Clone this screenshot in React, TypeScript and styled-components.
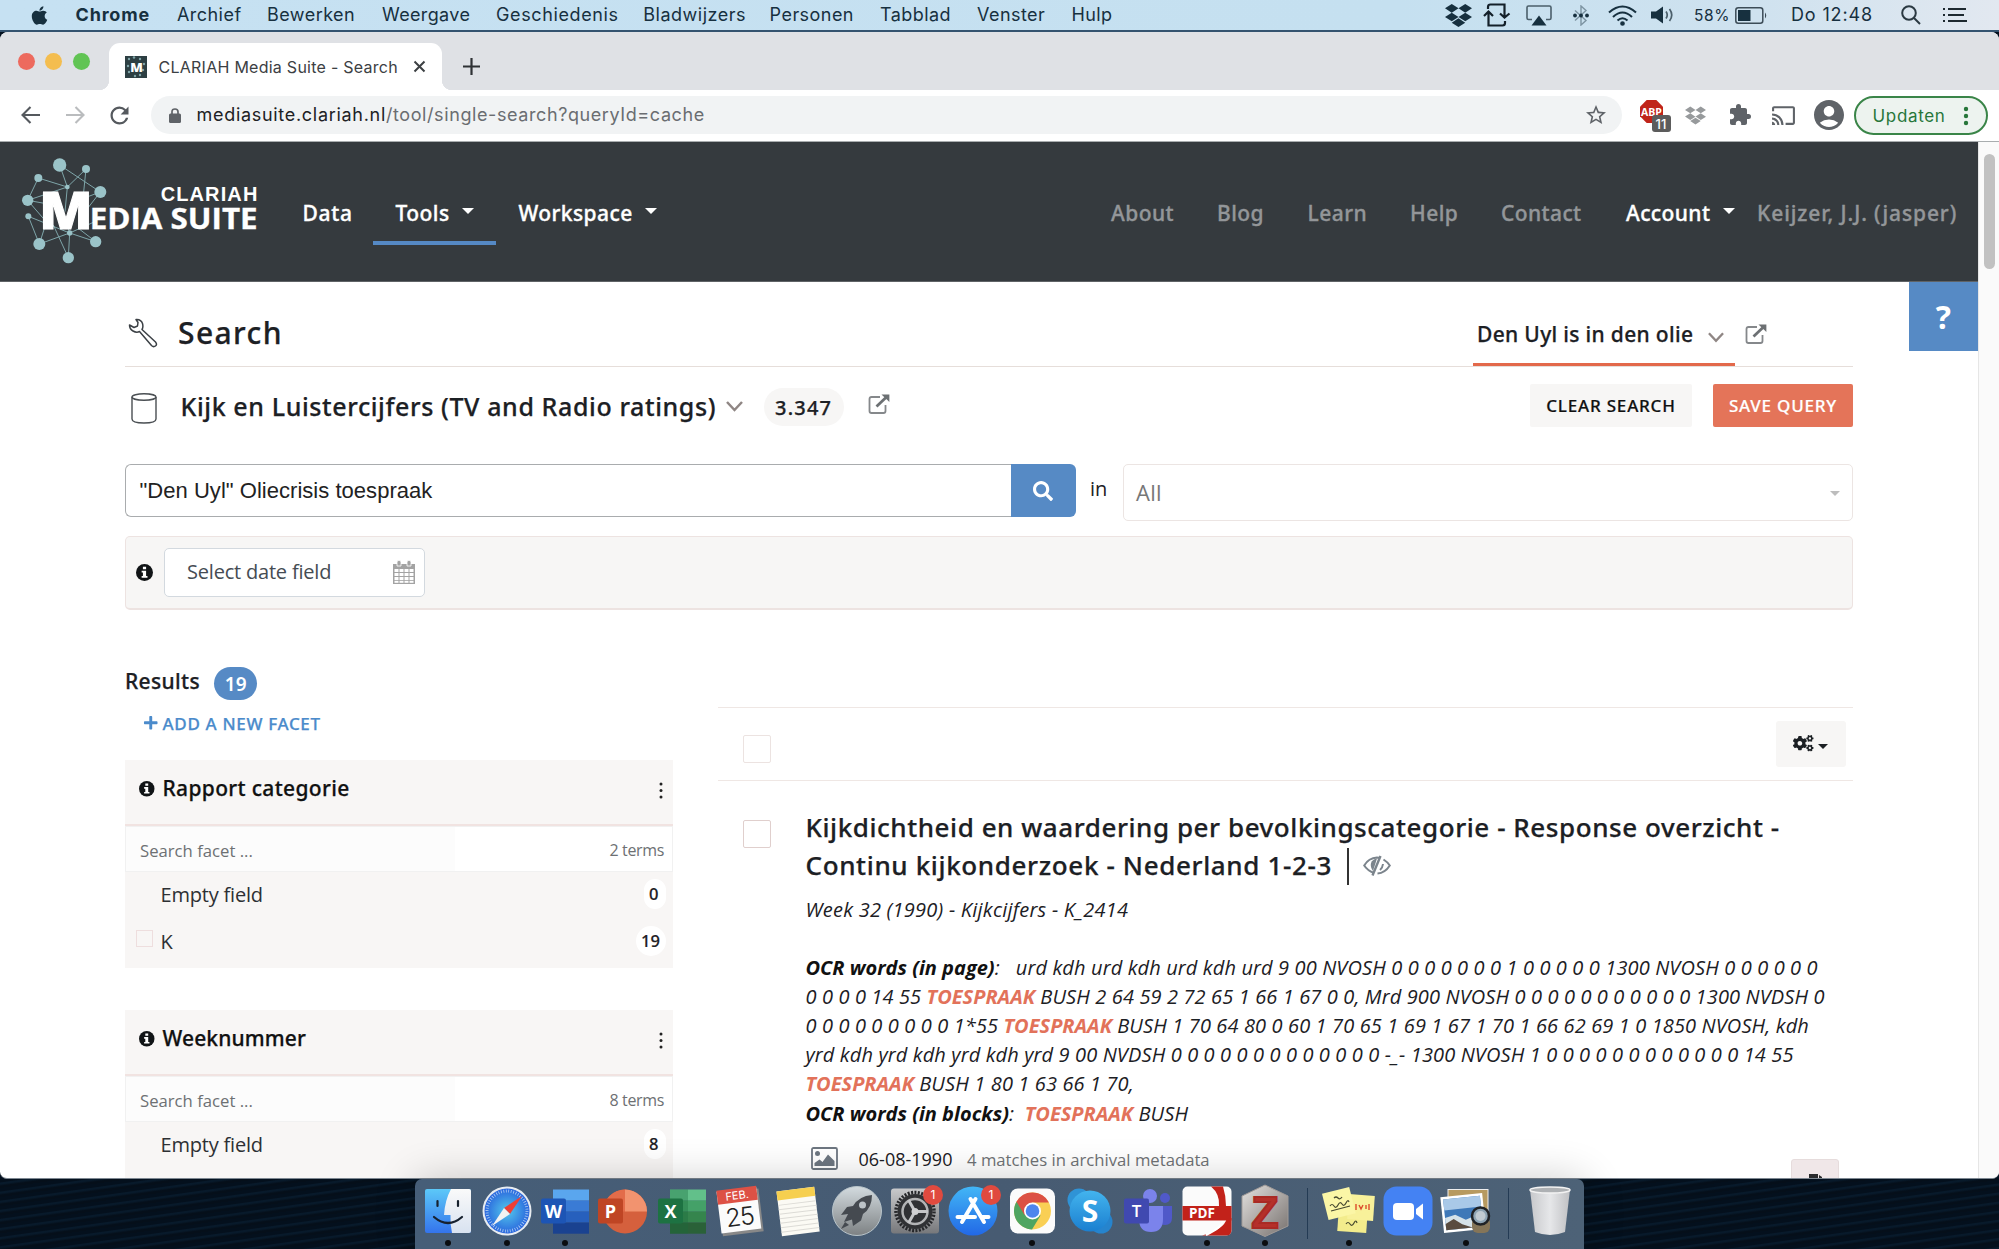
import React from 'react';
import styled, { createGlobalStyle } from 'styled-components';
import { FaApple, FaDropbox, FaPlus, FaSearch, FaCogs } from 'react-icons/fa';
import { MdExtension, MdCast, MdAccountCircle, MdStarBorder, MdRefresh } from 'react-icons/md';

const GlobalStyle = createGlobalStyle`
  * { box-sizing: border-box; }
  html, body { margin: 0; padding: 0; overflow: hidden; }
  body { width: 1999px; height: 1249px; background: #04111f; }
  svg { display: block; flex: none; }
`;

const ui = `"Inter", "Liberation Sans", sans-serif`;
const body = `"Open Sans", "Noto Sans", sans-serif`;
const heading = `"Noto Sans", "Open Sans", sans-serif`;

const Screen = styled.div`
  width: 1999px;
  height: 1249px;
  display: flex;
  flex-direction: column;
  overflow: hidden;
  background: #04111f;
  font-family: ${body};
  white-space: pre;
`;

/* ---------- macOS menu bar ---------- */

const MenuBar = styled.div`
  flex: none;
  height: 32px;
  display: flex;
  align-items: center;
  justify-content: space-between;
  padding: 0 32px 0 29px;
  background: linear-gradient(90deg, #c6e1f2 0%, #c5e0f0 70%, #cfe2ef 88%, #e2e8f0 100%);
  border-bottom: 2px solid #34536f;
  font-family: ${ui};
  color: #17303f;
`;
const MenuGroup = styled.div`
  display: flex;
  align-items: center;
  height: 30px;
`;
const MenuItem = styled.span<{ $slot?: number; $bold?: boolean; $ls?: number }>`
  font-size: 18px;
  line-height: 30px;
  width: ${p => (p.$slot ? p.$slot + 'px' : 'auto')};
  font-weight: ${p => (p.$bold ? 700 : 400)};
  letter-spacing: ${p => p.$ls ?? 0.45}px;
`;
const StatusSlot = styled.span<{ $slot: number }>`
  width: ${p => p.$slot}px;
  display: flex;
  align-items: center;
`;
const Percent = styled.span`
  width: 41px;
  font-size: 15.5px;
  letter-spacing: 0.6px;
`;

/* ---------- browser chrome ---------- */

const Browser = styled.div`
  flex: none;
  height: 1147px;
  display: flex;
  flex-direction: column;
  overflow: hidden;
  background: #fff;
  border-radius: 8px 8px 7px 7px;
  border-bottom: 1px solid #7d8791;
`;
const TabStrip = styled.div`
  flex: none;
  height: 58px;
  display: flex;
  align-items: flex-end;
  background: #dfe1e5;
`;
const Lights = styled.div`
  display: flex;
  gap: 10.9px;
  width: 108.5px;
  height: 58px;
  padding: 21px 0 0 17.5px;
`;
const Light = styled.i<{ $c: string }>`
  width: 17px;
  height: 17px;
  border-radius: 50%;
  background: ${p => p.$c};
`;
const Tab = styled.div`
  position: relative;
  width: 333px;
  height: 47px;
  display: flex;
  align-items: center;
  padding: 0 0 0 16.5px;
  border-radius: 11px 11px 0 0;
  background: #fff;
  font-family: ${ui};
  &::before,
  &::after {
    content: '';
    position: absolute;
    bottom: 0;
    width: 10px;
    height: 10px;
  }
  &::before {
    left: -10px;
    background: radial-gradient(circle at 0 0, transparent 10px, #fff 10.5px);
  }
  &::after {
    right: -10px;
    background: radial-gradient(circle at 100% 0, transparent 10px, #fff 10.5px);
  }
`;
const TabTitle = styled.span`
  width: 254.5px;
  margin-left: 11.5px;
  font-size: 16px;
  line-height: 24px;
  letter-spacing: 0.26px;
  color: #3c4043;
`;
const NewTab = styled.div`
  padding: 0 0 15px 21.5px;
`;
const Toolbar = styled.div`
  flex: none;
  height: 52px;
  display: flex;
  align-items: center;
  padding: 0 0 1px 20px;
  border-bottom: 1px solid #a9adaf;
  font-family: ${ui};
  color: #5f6368;
`;
const NavIcon = styled.span<{ $slot: number }>`
  width: ${p => p.$slot}px;
  display: flex;
`;
const Omnibox = styled.div`
  width: 1471px;
  height: 38px;
  display: flex;
  align-items: center;
  padding: 0 14px 0 18px;
  border-radius: 19px;
  background: #f1f3f4;
  font-size: 18px;
`;
const Url = styled.span`
  flex: 1;
  margin-left: 16px;
  line-height: 30px;
  letter-spacing: 0.59px;
  color: #6a6d71;
`;
const Host = styled.span`
  letter-spacing: 0.7px;
  color: #202124;
`;
const Extensions = styled.div`
  display: flex;
  align-items: center;
  height: 38px;
  padding-left: 18.5px;
`;
const AdBlock = styled.div`
  position: relative;
  width: 45px;
  height: 30px;
`;
const AdCount = styled.span`
  position: absolute;
  left: 11.5px;
  top: 15px;
  width: 19px;
  height: 17px;
  border-radius: 3px;
  background: #5c5c5c;
  color: #fff;
  font-size: 13px;
  font-weight: 500;
  line-height: 18px;
  text-align: center;
`;
const UpdateButton = styled.div`
  width: 134px;
  height: 39px;
  display: flex;
  align-items: center;
  justify-content: space-between;
  padding: 1px 17px 0 17px;
  border: 2px solid #3a8548;
  border-radius: 20px;
  background: #edf3ef;
  color: #27763a;
  font-size: 17px;
  letter-spacing: 0.66px;
`;

/* ---------- page shell ---------- */

const Viewport = styled.div`
  flex: 1;
  min-height: 0;
  display: flex;
`;
const Page = styled.div`
  position: relative;
  width: 1978px;
  overflow: hidden;
  color: #1c2024;
`;
const ScrollTrack = styled.div`
  width: 21px;
  padding: 12px 4px 0 5px;
  background: #fafafa;
  border-left: 1px solid #e6e6e6;
`;
const ScrollThumb = styled.div`
  width: 11px;
  height: 115px;
  border-radius: 6px;
  background: #c1c1c1;
`;
const SiteHeader = styled.header`
  height: 140px;
  display: flex;
  align-items: flex-start;
  padding: 3px 0 0 10px;
  background: #353a3e;
  border-bottom: 1px solid #5f6366;
`;
const SiteNav = styled.nav<{ $left: number }>`
  display: flex;
  align-items: flex-start;
  padding-top: 54px;
  margin-left: ${p => p.$left}px;
`;
const NavLink = styled.span<{ $slot: number; $muted?: boolean; $ls?: number; $pad?: number; $active?: boolean }>`
  width: ${p => p.$slot}px;
  height: 46px;
  padding-left: ${p => p.$pad ?? 0}px;
  display: flex;
  align-items: flex-start;
  font-family: ${heading};
  font-size: 21px;
  font-weight: 500;
  line-height: 29px;
  letter-spacing: ${p => p.$ls ?? 0.45}px;
  -webkit-text-stroke: 0.35px;
  color: ${p => (p.$muted ? '#939699' : '#fff')};
  border-bottom: ${p => (p.$active ? '4px solid #5589c5' : '0')};
`;
const Caret = styled.i<{ $c: string; $w: number; $ml: number; $mt: number }>`
  margin: ${p => p.$mt}px 0 0 ${p => p.$ml}px;
  border-left: ${p => p.$w}px solid transparent;
  border-right: ${p => p.$w}px solid transparent;
  border-top: ${p => p.$w}px solid ${p => p.$c};
`;
const HelpButton = styled.div`
  position: absolute;
  right: 0;
  top: 140px;
  width: 69px;
  height: 69px;
  background: #568ac5;
  color: #fff;
  font: 700 32px/69px ${body};
  text-align: center;
`;
const Content = styled.main`
  width: 1728px;
  margin-left: 125px;
`;

/* ---------- tool title and collection ---------- */

const TitleRow = styled.div`
  height: 85px;
  display: flex;
  align-items: flex-start;
  border-bottom: 1px solid #e6deda;
`;
const HeadText = styled.span<{ $size: number; $lh: number; $ls: number; $mt?: number; $ml?: number }>`
  font-family: ${heading};
  font-weight: 500;
  font-size: ${p => p.$size}px;
  line-height: ${p => p.$lh}px;
  letter-spacing: ${p => p.$ls}px;
  margin: ${p => p.$mt ?? 0}px 0 0 ${p => p.$ml ?? 0}px;
  -webkit-text-stroke: 0.25px;
`;
const IconBox = styled.span<{ $mt: number; $ml?: number }>`
  display: flex;
  margin: ${p => p.$mt}px 0 0 ${p => p.$ml ?? 0}px;
`;
const ProjectTab = styled.div`
  width: 262.5px;
  height: 84px;
  margin-left: auto;
  display: flex;
  padding: 37px 0 0 4.5px;
  border-bottom: 3px solid #e3694b;
`;
const ProjectLink = styled.div`
  width: 118px;
  padding: 41.5px 0 0 10px;
`;
const CollectionRow = styled.div`
  height: 97px;
  display: flex;
  align-items: flex-start;
`;
const CountPill = styled.div`
  width: 80px;
  height: 38px;
  margin: 21px 0 0 20.5px;
  border-radius: 19px;
  background: #f7f6f5;
  display: flex;
  justify-content: center;
`;
const Button = styled.div<{ $primary?: boolean }>`
  margin: 17px 0 0 ${p => (p.$primary ? '21px' : 'auto')};
  width: ${p => (p.$primary ? 140 : 162)}px;
  height: 43px;
  border-radius: 2px;
  background: ${p => (p.$primary ? '#e47459' : '#f7f6f5')};
  color: ${p => (p.$primary ? '#fff' : '#111')};
  font: 500 17px/43px ${heading};
  letter-spacing: 0.8px;
  text-align: center;
  -webkit-text-stroke: 0.2px;
`;

/* ---------- query form ---------- */

const QueryRow = styled.div`
  height: 72px;
  display: flex;
  align-items: flex-start;
`;
const QueryInput = styled.div`
  width: 885.5px;
  height: 53px;
  padding-left: 13.5px;
  border: 1px solid #a9acae;
  border-right: 0;
  border-radius: 6px 0 0 6px;
  font: 22px/51px "Liberation Sans", sans-serif;
  letter-spacing: 0.03px;
  color: #222;
`;
const QuerySubmit = styled.div`
  width: 65.5px;
  height: 53px;
  border-radius: 0 6px 6px 0;
  background: #568ac5;
  color: #fff;
  display: flex;
  align-items: center;
  justify-content: center;
`;
const InLabel = styled.span`
  width: 47px;
  padding-left: 14px;
  font-size: 20px;
  line-height: 49px;
`;
const FieldSelect = styled.div`
  flex: 1;
  height: 57px;
  display: flex;
  justify-content: space-between;
  padding: 0 12px;
  border: 1.5px solid #ece5e3;
  border-radius: 5px;
  font-size: 22px;
  line-height: 54px;
  letter-spacing: 0.3px;
  color: #777;
`;
const DateBar = styled.div`
  height: 74px;
  display: flex;
  align-items: center;
  padding-left: 9.5px;
  border: 1px solid #ede3e1;
  border-bottom-width: 2px;
  border-radius: 5px;
  background: #f7f6f5;
`;
const DateSelect = styled.div`
  width: 261px;
  height: 49px;
  margin-left: 11px;
  display: flex;
  align-items: center;
  justify-content: space-between;
  padding: 0 9px 2px 22.5px;
  border: 1.5px solid #d3d9df;
  border-radius: 5px;
  background: #fff;
  font-size: 20px;
  letter-spacing: -0.2px;
  color: #454c53;
`;

/* ---------- results ---------- */

const Columns = styled.div`
  display: flex;
  justify-content: space-between;
`;
const Sidebar = styled.aside`
  width: 548px;
  padding-top: 54px;
`;
const ResultsRow = styled.div`
  height: 47px;
  display: flex;
  align-items: flex-start;
`;
const ResultsBadge = styled.span`
  width: 43.5px;
  height: 33px;
  margin: 3px 0 0 14px;
  border-radius: 17px;
  background: #568ac5;
  color: #fff;
  font: 600 19px/34px ${heading};
  text-align: center;
`;
const AddFacet = styled.div`
  height: 49px;
  padding-left: 17.5px;
  display: flex;
  align-items: flex-start;
  color: #4b8bcb;
`;
const Facet = styled.section`
  height: 208px;
  margin-bottom: 42px;
  background: #f8f6f5;
`;
const FacetHead = styled.div`
  height: 66px;
  display: flex;
  align-items: flex-start;
  justify-content: space-between;
  padding: 13px 9.5px 0 14px;
  border-bottom: 2px solid #f1e3e1;
  color: #111;
`;
const FacetName = styled.div`
  display: flex;
`;
const FacetSearch = styled.div`
  height: 46px;
  display: flex;
  align-items: center;
  justify-content: space-between;
  padding: 2px 8px 0 14px;
  border: 1px solid #f1f1f1;
  background: linear-gradient(90deg, #fcfcfc 329px, #fff 329px);
  font-size: 16.7px;
  color: #6d7073;
`;
const TermCount = styled.span`
  font-size: 16px;
  letter-spacing: -0.35px;
`;
const TermRow = styled.div`
  height: 44px;
  margin-bottom: 3px;
  display: flex;
  align-items: center;
  padding: 0 7.5px 0 11px;
`;
const TermBox = styled.i<{ $hidden?: boolean }>`
  width: 17px;
  height: 17px;
  margin-bottom: 5px;
  border: 1.5px solid ${p => (p.$hidden ? 'transparent' : '#eedede')};
`;
const TermName = styled.span`
  flex: 1;
  margin-left: 7.5px;
  font-size: 20px;
  line-height: 43px;
  letter-spacing: -0.2px;
  color: #2d3033;
`;
const TermBadge = styled.span`
  height: 30px;
  min-width: 22px;
  padding: 0 5.5px;
  border-radius: 15px;
  background: #fff;
  font: 500 16.5px/29px ${heading};
  -webkit-text-stroke: 0.2px;
`;
const ResultList = styled.section`
  width: 1135.5px;
  padding-top: 97px;
`;
const ListTools = styled.div`
  height: 74px;
  display: flex;
  align-items: center;
  justify-content: space-between;
  padding: 0 7px 0 25.5px;
  border: solid #efe7e4;
  border-width: 1.5px 0;
`;
const CheckBox = styled.i<{ $dark?: boolean; $mt?: number }>`
  flex: none;
  width: 28px;
  height: 28px;
  margin-top: ${p => p.$mt ?? 0}px;
  border: 1.5px solid ${p => (p.$dark ? '#e0cfcd' : '#ece3e1')};
  border-radius: 2px;
`;
const GearButton = styled.div`
  width: 70px;
  height: 46px;
  padding: 0 0 2px 17px;
  display: flex;
  align-items: center;
  border-radius: 3px;
  background: #f7f6f5;
  color: #1c2024;
`;
const Result = styled.article`
  display: flex;
  align-items: flex-start;
  padding-left: 25.5px;
`;
const ResultBody = styled.div`
  flex: 1;
  padding: 28px 0 0 34.5px;
`;
const ResultTitle = styled.div`
  height: 37.7px;
  display: flex;
  align-items: center;
`;
const TitleDivider = styled.i`
  width: 1.5px;
  height: 37px;
  margin: 1px 14.5px 0 15.5px;
  background: #333;
`;
const Subtitle = styled.div`
  margin-top: 10.5px;
  font-size: 20px;
  font-style: italic;
  line-height: 29px;
  letter-spacing: 0.24px;
`;
const Snippets = styled.div`
  margin-top: 28.9px;
`;
const SnippetLine = styled.div`
  font-size: 20px;
  font-style: italic;
  line-height: 29.15px;
  letter-spacing: 0.125px;
`;
const Label = styled.b`
  letter-spacing: 0;
  color: #111;
`;
const Hit = styled.b`
  letter-spacing: 0;
  color: #e2725a;
`;
const MetaRow = styled.div`
  height: 50px;
  margin-top: 14.5px;
  display: flex;
  align-items: flex-start;
`;
const MetaDate = styled.span`
  width: 108.5px;
  margin: 3px 0 0 20.5px;
  font-size: 18px;
  line-height: 29px;
`;
const MetaMatches = styled.span`
  flex: 1;
  margin-top: 3px;
  font-size: 16.7px;
  line-height: 30px;
  color: #6f7275;
`;
const BookmarkButton = styled.div`
  width: 48px;
  height: 46px;
  margin: 17px 14px 0 0;
  display: flex;
  justify-content: center;
  padding-top: 14px;
  border: 1px solid #e6dcdc;
  border-radius: 3px;
  background: #f0e7e8;
`;

/* ---------- dock ---------- */

const Desktop = styled.div`
  flex: none;
  height: 70px;
  padding-left: 415px;
  background: repeating-linear-gradient(172deg, #04101d 0 3px, #081a2b 4px 5px, #050f1a 7px 9px);
`;
const Dock = styled.div`
  position: relative;
  width: 1169px;
  height: 70px;
  display: flex;
  padding-left: 4px;
  border-radius: 7px 7px 0 0;
  background: linear-gradient(90deg, #465e78 0%, #475b72 50%, #4d6277 100%);
  box-shadow: 0 0 42px rgba(0, 0, 0, 0.2);
`;
const DockSlot = styled.div`
  width: 58.35px;
  height: 70px;
  display: flex;
  flex-direction: column;
  align-items: center;
  padding-top: 7px;
`;
const RunningDot = styled.i`
  width: 6px;
  height: 6px;
  margin-top: 4px;
  border-radius: 50%;
  background: #0b0d10;
`;
const DockDivider = styled.i`
  width: 1.5px;
  height: 51px;
  margin: 9px 12px 0 12.5px;
  background: #243b54;
`;

/* ---------- drawings ---------- */

const OpenLinkIcon = ({ w = 22, h = 20 }: { w?: number; h?: number }) => (
  <svg width={w} height={h} viewBox="0 0 22 20" preserveAspectRatio="none" fill="none" stroke="#85888b" strokeWidth="1.8">
    <path d="M12 3H3.5Q1.5 3 1.5 5V17Q1.5 19 3.500 19H15.500Q17.500 19 17.500 17V11" />
    <path d="M8.500 12.500L18 3.500" stroke="#6c7073" strokeWidth="2.800" />
    <path d="M13.500 .6H21.400V8Z" fill="#6c7073" stroke="none" />
  </svg>
);
const Chevron = ({ w = 17 }: { w?: number }) => (
  <svg width={w} height="11" viewBox="0 0 17 11" fill="none" stroke="#8f8684" strokeWidth="2.500"><path d="M1 1L8.500 9L16 1" /></svg>
);
const Dots = ({ c, gap, r }: { c: string; gap: number; r: number }) => (
  <svg width="6" height={gap * 2 + 6} fill={c}>{[0, 1, 2].map(i => <circle key={i} cx="3" cy={3 + gap * i} r={r} />)}</svg>
);
const InfoIcon = ({ size }: { size: number }) => (
  <svg width={size} height={size} viewBox="0 0 16 16">
    <circle cx="8" cy="8" r="8" fill="#111416" />
    <path d="M6.500 2.500H9.500V5H6.500ZM5.300 6.300H9.500V11.300H10.800V13H5.300V11.300H6.500V8H5.300Z" fill="#fff" />
  </svg>
);
const LockIcon = () => (
  <svg width="12" height="15" viewBox="0 0 12 15"><rect y="5.500" width="12" height="9.500" rx="1.500" fill="#5f6368" /><path d="M3 6V3.800Q3 1 6 1T9 3.800V6" fill="none" stroke="#5f6368" strokeWidth="1.700" /></svg>
);

const nodes = [[149, 60, 20], [228, 72, 12], [85, 99, 12], [172, 126, 7], [271, 141, 18], [53, 166, 17], [55, 214, 9], [88, 297, 18], [179, 264, 8], [257, 290, 17], [175, 338, 17]];
const edges = [
  [149, 60, 172, 126], [149, 60, 271, 141], [228, 72, 172, 126], [228, 72, 219, 160], [85, 99, 172, 126], [85, 99, 53, 166],
  [53, 166, 172, 126], [53, 166, 120, 178], [53, 166, 110, 232], [55, 214, 88, 297], [55, 214, 179, 264], [88, 297, 179, 264],
  [88, 297, 108, 235], [179, 264, 257, 290], [179, 264, 175, 338], [179, 264, 160, 200], [175, 338, 130, 240], [172, 126, 165, 200],
  [271, 141, 225, 200], [257, 290, 205, 250], [179, 264, 250, 232], [271, 141, 220, 160],
];
const Logo = () => (
  <svg width="260" height="130" viewBox="0 0 780 390">
    <g stroke="#7ea5a9" strokeWidth="3">{edges.map(([a, b, c, d], i) => <line key={i} x1={a} y1={b} x2={c} y2={d} />)}</g>
    <g fill="#9ac3c8">{nodes.map(([x, y, r], i) => <circle key={i} cx={x} cy={y} r={r} />)}</g>
    <g fill="#fff" fontFamily="Open Sans, sans-serif" fontWeight="700">
      <text x="88" y="252" fontSize="154" fontWeight="800" textLength="160" lengthAdjust="spacingAndGlyphs" stroke="#fff" strokeWidth="3">M</text>
      <text x="239" y="252" fontSize="88" textLength="504" lengthAdjust="spacingAndGlyphs" stroke="#fff" strokeWidth="1">EDIA SUITE</text>
      <text x="452" y="167" fontSize="60" textLength="290" fontFamily="Liberation Sans, sans-serif">CLARIAH</text>
    </g>
  </svg>
);

const Favicon = () => (
  <svg width="22" height="22" viewBox="0 0 22 22">
    <rect width="22" height="22" fill="#2d3f43" />
    <g fill="#7fa5a8">{[[4, 3], [9, 1.5], [15, 3], [19, 8], [18, 14], [3, 10], [4, 16], [10, 20], [15, 19]].map(([x, y], i) => <circle key={i} cx={x} cy={y} r="1.200" />)}</g>
    <text x="11.500" y="15.500" textAnchor="middle" fontSize="13" fontWeight="800" fontFamily="Open Sans" fill="#fff">M</text>
  </svg>
);

const Office = ({ letter, dark, bands }: { letter: string; dark: string; bands: string[] }) => (
  <svg width="50" height="50" viewBox="0 0 50 50">
    <g>{bands.map((c, i) => <rect key={i} x="13" y={3.500 + i * 11} width="36" height="11.200" fill={c} />)}</g>
    {letter === 'X' && <rect x="13" y="3.500" width="18" height="44" fill="#1a6b3c" opacity=".35" />}
    <rect x="1" y="12.500" width="25" height="25" rx="2" fill={dark} />
    <text x="13.500" y="31.500" textAnchor="middle" fontSize="18" fontWeight="700" fontFamily="Open Sans" fill="#fff">{letter}</text>
  </svg>
);
const AlertBadge = () => (
  <g><circle cx="43" cy="9" r="10" fill="#e04a3f" /><text x="43" y="13.300" textAnchor="middle" fontSize="12" fontFamily="Inter" fill="#fff">1</text></g>
);
const S = ({ children }: { children: React.ReactNode }) => <svg width="50" height="50" viewBox="0 0 50 50" overflow="visible">{children}</svg>;

const apps: { dot?: boolean; icon: React.ReactNode }[] = [
  { dot: true, icon: <S>
    <defs><linearGradient id="fl" x2="0" y2="1"><stop stopColor="#5cc8f8" /><stop offset="1" stopColor="#3474ec" /></linearGradient><linearGradient id="fr" x2="0" y2="1"><stop stopColor="#fafafa" /><stop offset="1" stopColor="#d8e2f0" /></linearGradient></defs>
    <rect x="2" y="3" width="46" height="44" rx="2" fill="url(#fl)" /><path d="M28 3H46Q48 3 48 5V45Q48 47 46 47H29Q27 38 27.500 29H21Q22 14 28 3Z" fill="url(#fr)" />
    <path d="M14.500 15V20M35 15V20M11 31Q25 43 39 31" stroke="#17212e" strokeWidth="2.200" fill="none" strokeLinecap="round" /></S> },
  { dot: true, icon: <S>
    <defs><radialGradient id="sf"><stop stopColor="#53c8ec" /><stop offset="1" stopColor="#2a66dd" /></radialGradient></defs>
    <circle cx="25" cy="25" r="24.500" fill="#e8ecf0" /><circle cx="25" cy="25" r="22.500" fill="url(#sf)" />
    <circle cx="25" cy="25" r="20" fill="none" stroke="#cfe4fa" strokeWidth="3" strokeDasharray=".8 1.700" opacity=".8" />
    <path d="M40 10L28 28L22 22Z" fill="#ee3f36" /><path d="M10 40L28 28L22 22Z" fill="#f2f2f2" /></S> },
  { dot: true, icon: <Office letter="W" dark="#1d55b5" bands={['#5aa6ee', '#3a7bd5', '#2760bd', '#1a4290']} /> },
  { icon: <S><circle cx="27" cy="25.500" r="22" fill="#d5603d" /><path d="M27 3.500A22 22 0 0 1 49 25.500H27Z" fill="#f2936f" /><path d="M27 25.500V3.500A22 22 0 0 0 5 25.500Z" fill="#e36c4a" /><rect x="0" y="12.500" width="25" height="25" rx="2" fill="#bf4524" /><text x="12.500" y="31.500" textAnchor="middle" fontSize="18" fontWeight="700" fontFamily="Open Sans" fill="#fff">P</text></S> },
  { icon: <Office letter="X" dark="#1d7242" bands={['#62c08a', '#44a168', '#35854d', '#2a6138']} /> },
  { icon: <S><g transform="rotate(-7 25 25)"><rect x="5" y="5" width="41" height="43" fill="#888" /><rect x="4" y="3" width="40" height="42" fill="#fbfbfb" /><rect x="4" y="2" width="40" height="14" fill="#dd5145" />
    <text x="24" y="13" textAnchor="middle" fontSize="11" fontFamily="Inter" fill="#fff">FEB.</text><text x="24" y="39.500" textAnchor="middle" fontSize="25" fontWeight="300" fontFamily="Inter" letterSpacing="-1" fill="#222">25</text></g></S> },
  { icon: <S><g transform="rotate(-7 25 25)"><rect x="6" y="3" width="38" height="45" fill="#fbfaf4" /><rect x="6" y="3" width="38" height="9" fill="#f6cf4f" /><path d="M6 17H44M6 21.500H44M6 26H44M6 30.500H44M6 35H44M6 39.500H44M6 44H44" stroke="#dcdbd6" /></g></S> },
  { icon: <S><defs><linearGradient id="lp" x2="0" y2="1"><stop stopColor="#d3dbdf" /><stop offset="1" stopColor="#7d8183" /></linearGradient></defs><circle cx="25" cy="25" r="24.500" fill="url(#lp)" stroke="#b8c4ca" />
    <path d="M40 9Q27 10 21 20L15 21L9 29L16 28L12 36L20 33.500L21 40L29 34.500L31 28Q40 22 40 9Z" fill="#454a50" /><circle cx="30.500" cy="19" r="3.500" fill="#bcc3c7" /><path d="M13 36L9 43L17 39Z" fill="#454a50" /></S> },
  { icon: <S><defs><linearGradient id="sp" x2="0" y2="1"><stop stopColor="#c8c9cb" /><stop offset="1" stopColor="#77787b" /></linearGradient></defs><rect x="1" y="2.500" width="48" height="45" rx="3" fill="url(#sp)" />
    <circle cx="25" cy="25.500" r="19" fill="none" stroke="#26272a" strokeWidth="3.500" strokeDasharray="2 1.400" /><circle cx="25" cy="25.500" r="17.500" fill="#303134" /><circle cx="25" cy="25.500" r="12.500" fill="#303134" stroke="#b2b3b5" strokeWidth="2.500" />
    <path d="M25 25.500H38M25 25.500L18.500 14M25 25.500L18.500 37" stroke="#c4c5c7" strokeWidth="3" /><circle cx="25" cy="25.500" r="3.500" fill="#d0d0d2" /><AlertBadge /></S> },
  { icon: <S><defs><linearGradient id="as" x2="0" y2="1"><stop stopColor="#42b6f6" /><stop offset="1" stopColor="#2268e6" /></linearGradient></defs><circle cx="25" cy="25" r="24.500" fill="url(#as)" />
    <path d="M27.500 13L14 36M22.500 13L36 36M9.500 31H27M34 31H40.500" stroke="#fff" strokeWidth="4" strokeLinecap="round" /><AlertBadge /></S> },
  { dot: true, icon: <S><rect x="3" y="2.500" width="45" height="45" rx="8" fill="#fbfbfb" /><circle cx="25.500" cy="25" r="18.500" fill="#f9cf54" />
    <path d="M25.500 25L9.500 15.700A18.500 18.500 0 0 0 25 43.500L33.500 29.500Z" fill="#4fa561" /><path d="M25.500 16.500H41.900A18.500 18.500 0 0 0 9.500 15.700L17.500 29Z" fill="#dc5144" /><circle cx="25.500" cy="25" r="8.500" fill="#fff" /><circle cx="25.500" cy="25" r="6.800" fill="#4d86ee" /></S> },
  { icon: <S><defs><linearGradient id="sk" x2="0" y2="1"><stop stopColor="#43b4ee" /><stop offset="1" stopColor="#1b7fd0" /></linearGradient></defs><circle cx="14" cy="14" r="11.500" fill="#2f93d6" /><circle cx="36" cy="36" r="11.500" fill="#2684cd" /><circle cx="25" cy="25" r="20.500" fill="url(#sk)" />
    <text x="25" y="35.500" textAnchor="middle" fontSize="30" fontWeight="700" fontFamily="Open Sans" fill="#fff">S</text></S> },
  { icon: <S><circle cx="27" cy="10" r="7" fill="#7b83eb" /><circle cx="42" cy="12" r="5" fill="#5059c9" /><path d="M34 20H49V32Q49 39 42 39Q37 39 34 35Z" fill="#5059c9" /><path d="M16 20H40V33Q40 46 28 46Q16 46 16 33Z" fill="#7b83eb" />
    <rect x="1" y="12.500" width="25" height="25" rx="2" fill="#4049b0" /><text x="13.500" y="31" textAnchor="middle" fontSize="17" fontWeight="600" fontFamily="Open Sans" fill="#fff">T</text></S> },
  { dot: true, icon: <S><rect x=".5" y=".5" width="49" height="49" rx="5" fill="#fbfbfb" /><path d="M29 .5H41Q44 10 44 20L37 20Q38 8 29 .5Z" fill="#c2221a" /><path d="M49.500 32V44Q49.500 49.500 44 49.500H20Q42 44 45 32Z" fill="#c2221a" /><path d="M24 49Q40 42 41 34" stroke="#fff" strokeWidth="2" fill="none" />
    <rect x=".5" y="20" width="49" height="14.500" fill="#c2221a" /><text x="20" y="32" textAnchor="middle" fontSize="13.500" fontWeight="700" fontFamily="Open Sans" fill="#fff">PDF</text></S> },
  { dot: true, icon: <S><defs><linearGradient id="zo" x2="1" y2="1"><stop stopColor="#e4e2e0" /><stop offset="1" stopColor="#77716e" /></linearGradient></defs><path d="M25-1L48 10V40L25 50.500L2 40V10Z" fill="url(#zo)" stroke="#a09a97" />
    <text x="25" y="41.500" textAnchor="middle" fontSize="45" fontWeight="800" fontFamily="Liberation Sans" stroke="#a92a24" strokeWidth="2" fill="#b5302a">Z</text></S> },
];
const recents: { dot?: boolean; icon: React.ReactNode }[] = [
  { dot: true, icon: <S><rect x="14" y="24" width="29" height="22" fill="#f3ec8c" transform="rotate(4 29 35)" /><rect x="24" y="9" width="26" height="25" fill="#f8f19a" transform="rotate(4 37 21)" /><rect x="1" y="4" width="28" height="27" fill="#fbf6a6" transform="rotate(-14 15 18)" />
    <path d="M6 20q2-3 4 0t4-1t4-1t4-1t3-1M7 25l19-5M10 12q2-2 4 0t4-1M22 38q2-3 4 0t4-1t3 0" stroke="#47492f" fill="none" strokeWidth="1.200" /><path d="M32 18v6m3-5l2 4l2-4m3 0v4m3-5v6" stroke="#dd4b2d" strokeWidth="1.400" fill="none" /></S> },
  { icon: <S><rect x=".5" y=".5" width="49" height="49" rx="13" fill="#4482f3" /><rect x="10" y="17" width="21" height="17" rx="4" fill="#fff" /><path d="M33 23L40 17.500V33.500L33 28Z" fill="#fff" /></S> },
  { dot: true, icon: <S><rect x="7" y="3.500" width="40" height="30" fill="#b79a60" stroke="#eee" /><g transform="rotate(-6 22 26)"><rect x="1" y="9" width="42" height="36" fill="#fff" /><rect x="3.500" y="11.500" width="37" height="31" fill="#3e78b8" /><rect x="3.500" y="11.500" width="37" height="11" fill="#a9c9e8" /><path d="M3.500 30L14 28L24 34L40 29V42.500H3.500Z" fill="#d6e2e8" /><path d="M3.500 36L12 32L20 38L30 42.500H3.500Z" fill="#5a4c40" /></g>
    <rect x="31" y="31" width="18" height="16" rx="6" fill="#857558" /><circle cx="39.500" cy="30" r="8.500" fill="#8ea4b4" stroke="#1f2226" strokeWidth="2.500" /><circle cx="39.500" cy="30" r="5" fill="#c1cbd2" /></S> },
];
const Trash = () => (
  <S><defs><linearGradient id="tr" x2="1"><stop stopColor="#c7c8cb" /><stop offset=".5" stopColor="#e6e7e9" /><stop offset="1" stopColor="#bfc0c3" /></linearGradient></defs>
    <path d="M5 3.500L10 46Q25 52 40 46L45 3.500Z" fill="url(#tr)" /><ellipse cx="25" cy="4" rx="20" ry="3" fill="#aeb1b4" stroke="#f2f2f2" strokeWidth="1.500" /></S>
);

const menus: [string, number, number][] = [
  ['Archief', 90, 0.45], ['Bewerken', 115, 0.45], ['Weergave', 114, 0.35], ['Geschiedenis', 147.3, 0.62], ['Bladwijzers', 126.3, 0.5],
  ['Personen', 110.4, 0.45], ['Tabblad', 97, 0.45], ['Venster', 94.4, 0.45], ['Hulp', 60, 0.45],
];

const FacetCard = ({ name, ls, terms, rows }: { name: string; ls: number; terms: string; rows: [string, string, boolean][] }) => (
  <Facet>
    <FacetHead>
      <FacetName>
        <IconBox $mt={8}><InfoIcon size={15.500} /></IconBox>
        <HeadText $size={21} $lh={30} $ls={ls} $ml={8}>{name}</HeadText>
      </FacetName>
      <IconBox $mt={7.500}><Dots c="#222" gap={6.500} r={1.500} /></IconBox>
    </FacetHead>
    <FacetSearch><span>Search facet ...</span><TermCount>{terms}</TermCount></FacetSearch>
    {rows.map(([label, count, box]) => (
      <TermRow key={label}><TermBox $hidden={!box} /><TermName>{label}</TermName><TermBadge>{count}</TermBadge></TermRow>
    ))}
  </Facet>
);

export default function App() {
  return (
    <Screen>
      <GlobalStyle />
      <MenuBar>
        <MenuGroup>
          <StatusSlot $slot={46.500}><FaApple size={21} /></StatusSlot>
          <MenuItem $slot={101.500} $bold $ls={0.82}>Chrome</MenuItem>
          {menus.map(([m, w, ls]) => <MenuItem key={m} $slot={w} $ls={ls}>{m}</MenuItem>)}
        </MenuGroup>
        <MenuGroup>
          <StatusSlot $slot={38}><FaDropbox size={27} /></StatusSlot>
          <StatusSlot $slot={43}>
            <svg width="28" height="24" viewBox="0 0 28 24" fill="none" stroke="#14202a" strokeWidth="2.200">
              <path d="M5 6V4Q5 1.500 7.500 1.500H21.500V14M17 10.500L21.500 14.500L26.500 10.500M22 18V20Q22 22.500 19.500 22.500H5.500V9M1 13L5.500 8.500L10 13" />
            </svg>
          </StatusSlot>
          <StatusSlot $slot={47}>
            <svg width="26" height="21" viewBox="0 0 26 21"><path d="M6 14.500H2.500Q1 14.500 1 13V2.500Q1 1 2.500 1H23.500Q25 1 25 2.500V13Q25 14.500 23.500 14.500H20" fill="none" stroke="#4b5f6b" strokeWidth="1.600" /><path d="M13 10.500L20.500 20.500H5.500Z" fill="#17303f" /></svg>
          </StatusSlot>
          <StatusSlot $slot={35.500}>
            <svg width="16" height="21" viewBox="0 0 16 21"><path d="M2 5.500L13 15.500L8 20V1L13 5.500L2 15.500" fill="none" stroke="#7d94a2" strokeWidth="1.400" /><g fill="#17303f"><circle cx="2" cy="10.500" r="1.900" /><circle cx="8" cy="10.500" r="1.900" /><circle cx="14" cy="10.500" r="1.900" /></g></svg>
          </StatusSlot>
          <StatusSlot $slot={43}>
            <svg width="29" height="21" viewBox="0 0 29 21" fill="none" stroke="#17303f" strokeWidth="2.100"><path d="M1 7.500Q14.500-4.500 28 7.500M5 12Q14.500 3 24 12M9.500 15.500Q14.500 11 19.500 15.500" /><circle cx="14.500" cy="18.500" r="1.300" fill="#17303f" /></svg>
          </StatusSlot>
          <StatusSlot $slot={43}>
            <svg width="24" height="18" viewBox="0 0 24 18"><path d="M0 5.500H5L12 .5V17.500L5 12.500H0Z" fill="#17303f" /><path d="M15 5.500Q17.500 9 15 12.500M18.500 3Q23 9 18.500 15" fill="none" stroke="#4b5f6b" strokeWidth="1.700" /></svg>
          </StatusSlot>
          <Percent>58%</Percent>
          <StatusSlot $slot={56}>
            <svg width="33" height="17" viewBox="0 0 33 17"><rect x=".8" y=".8" width="27" height="15.400" rx="2.500" fill="none" stroke="#3c4c57" strokeWidth="1.500" /><rect x="3" y="3" width="12.500" height="11" fill="#17303f" /><path d="M30 5.500Q32.500 8.500 30 11.500Z" fill="#3c4c57" /></svg>
          </StatusSlot>
          <MenuItem $slot={110} $ls={0.86}>Do 12:48</MenuItem>
          <StatusSlot $slot={41}>
            <svg width="20" height="20" viewBox="0 0 20 20" fill="none" stroke="#2b3942" strokeWidth="2"><circle cx="8" cy="8" r="6.800" /><path d="M13 13L19 19" /></svg>
          </StatusSlot>
          <svg width="25" height="16" viewBox="0 0 25 16" fill="none" stroke="#1d2930" strokeWidth="2.200"><path d="M6 2H24M6 8H22M6 14H25M1 2H3M1 8H3M1 14H3" /></svg>
        </MenuGroup>
      </MenuBar>

      <Browser>
        <TabStrip>
          <Lights><Light $c="#ed6a5e" /><Light $c="#f4bd4f" /><Light $c="#61c454" /></Lights>
          <Tab>
            <Favicon />
            <TabTitle>CLARIAH Media Suite - Search</TabTitle>
            <svg width="13" height="13" viewBox="0 0 13 13" stroke="#3c4043" strokeWidth="2"><path d="M1.500 1.500L11.500 11.500M11.500 1.500L1.500 11.500" /></svg>
          </Tab>
          <NewTab><svg width="17" height="17" viewBox="0 0 17 17" stroke="#2f3235" strokeWidth="2.200"><path d="M8.500 0V17M0 8.500H17" /></svg></NewTab>
        </TabStrip>
        <Toolbar>
          <NavIcon $slot={45}><svg width="21" height="18" viewBox="0 0 21 18" fill="none" stroke="#55595e" strokeWidth="2.100"><path d="M20 9H3M10.500 1L2.500 9L10.500 17" /></svg></NavIcon>
          <NavIcon $slot={41}><svg width="21" height="18" viewBox="0 0 21 18" fill="none" stroke="#babcbe" strokeWidth="2.100"><path d="M1 9H18M10.500 1L18.500 9L10.500 17" /></svg></NavIcon>
          <NavIcon $slot={44.500}><MdRefresh size={27} color="#55595e" /></NavIcon>
          <Omnibox>
            <LockIcon />
            <Url><Host>mediasuite.clariah.nl</Host>/tool/single-search?queryId=cache</Url>
            <MdStarBorder size={24} />
          </Omnibox>
          <Extensions>
            <AdBlock>
              <svg width="23" height="23" viewBox="0 0 23 23"><path d="M6.700 0H16.300L23 6.700V16.300L16.300 23H6.700L0 16.300V6.700Z" fill="#c0241a" /><text x="11.500" y="15.500" textAnchor="middle" fontSize="10.500" fontWeight="700" fontFamily="Open Sans" fill="#fff">ABP</text></svg>
              <AdCount>11</AdCount>
            </AdBlock>
            <NavIcon $slot={43}><FaDropbox size={21} color="#979a9c" /></NavIcon>
            <NavIcon $slot={43}><MdExtension size={24} /></NavIcon>
            <NavIcon $slot={40}><MdCast size={25} /></NavIcon>
            <NavIcon $slot={42.500}><MdAccountCircle size={36} /></NavIcon>
            <UpdateButton>Updaten<Dots c="#27763a" gap={7} r={2.200} /></UpdateButton>
          </Extensions>
        </Toolbar>

        <Viewport>
          <Page>
            <SiteHeader>
              <Logo />
              <SiteNav $left={32.500}>
                <NavLink $slot={70.500} $ls={0.700}>Data</NavLink>
                <NavLink $slot={122.500} $pad={22.500} $active>Tools<Caret $c="#fff" $w={6} $ml={12.500} $mt={9} /></NavLink>
                <NavLink $slot={160} $pad={23} $ls={0.420}>Workspace<Caret $c="#fff" $w={6} $ml={12.500} $mt={9} /></NavLink>
              </SiteNav>
              <SiteNav $left={455.500}>
                <NavLink $muted $slot={106}>About</NavLink>
                <NavLink $muted $slot={90.500}>Blog</NavLink>
                <NavLink $muted $slot={102.500}>Learn</NavLink>
                <NavLink $muted $slot={91}>Help</NavLink>
                <NavLink $muted $slot={125} $ls={0.400}>Contact</NavLink>
                <NavLink $slot={131} $ls={0.400}>Account<Caret $c="#fff" $w={6.500} $ml={12.500} $mt={9} /></NavLink>
                <NavLink $muted $slot={210} $ls={0.900}>Keijzer, J.J. (jasper)</NavLink>
              </SiteNav>
            </SiteHeader>
            <HelpButton>?</HelpButton>

            <Content>
              <TitleRow>
                <IconBox $mt={36} $ml={2.500}>
                  <svg width="30" height="30" viewBox="0 0 30 30" fill="none" stroke="#3b4045" strokeWidth="1.500" strokeLinejoin="round">
                    <path d="M8 1.500Q13 1 14.500 5.500Q15.500 9 14 11.500L27.500 24Q29.500 26.500 27.500 28Q25.500 29.500 23.500 27.500L11.500 13.500Q8.500 15 5 13Q1.500 11 1.500 7L6 9.500L9.500 8L10 4.500Z" />
                  </svg>
                </IconBox>
                <HeadText $size={30} $lh={40} $ls={1.400} $mt={31} $ml={20.500}>Search</HeadText>
                <ProjectTab>
                  <HeadText $size={21} $lh={30} $ls={0.320}>Den Uyl is in den olie</HeadText>
                  <IconBox $mt={13} $ml={14.500}><Chevron w={16} /></IconBox>
                </ProjectTab>
                <ProjectLink><OpenLinkIcon /></ProjectLink>
              </TitleRow>

              <CollectionRow>
                <IconBox $mt={25.500} $ml={6}>
                  <svg width="26" height="31" viewBox="0 0 26 31" fill="none" stroke="#4a4f53" strokeWidth="1.400"><ellipse cx="13" cy="4" rx="12" ry="3.200" /><path d="M1 4V26Q1 30 13 30T25 26V4" /></svg>
                </IconBox>
                <HeadText $size={25} $lh={36} $ls={0.610} $mt={21} $ml={23.500}>Kijk en Luistercijfers (TV and Radio ratings)</HeadText>
                <IconBox $mt={34} $ml={10}><Chevron /></IconBox>
                <CountPill><HeadText $size={20} $lh={39} $ls={1.200}>3.347</HeadText></CountPill>
                <IconBox $mt={27} $ml={24}><OpenLinkIcon /></IconBox>
                <Button>CLEAR SEARCH</Button>
                <Button $primary>SAVE QUERY</Button>
              </CollectionRow>

              <QueryRow>
                <QueryInput>"Den Uyl" Oliecrisis toespraak</QueryInput>
                <QuerySubmit><FaSearch size={20} /></QuerySubmit>
                <InLabel>in</InLabel>
                <FieldSelect>All<Caret $c="#bdbdbd" $w={5} $ml={0} $mt={26} /></FieldSelect>
              </QueryRow>

              <DateBar>
                <InfoIcon size={17} />
                <DateSelect>
                  Select date field
                  <svg width="22" height="24" viewBox="0 0 22 24"><path d="M0 4H22V24H0Z" fill="#a3a3a3" /><path d="M4 1.500Q6 -1 8 1.500V6H4ZM14 1.500Q16 -1 18 1.500V6H14Z" fill="#a3a3a3" stroke="#fff" strokeWidth=".8" /><g fill="#fff">{[9, 13, 17, 20.800].map(y => [1.500, 6.500, 11.500, 16.500].map(x => <rect key={x + '-' + y} x={x} y={y} width="4" height={y > 20 ? 2 : 3} />))}</g></svg>
                </DateSelect>
              </DateBar>

              <Columns>
                <Sidebar>
                  <ResultsRow>
                    <HeadText $size={21} $lh={35} $ls={0.330}>Results</HeadText>
                    <ResultsBadge>19</ResultsBadge>
                  </ResultsRow>
                  <AddFacet>
                    <IconBox $mt={4}><FaPlus size={15.500} /></IconBox>
                    <HeadText $size={17} $lh={24} $ls={0.660} $mt={0.500} $ml={4.500}>ADD A NEW FACET</HeadText>
                  </AddFacet>
                  <FacetCard name="Rapport categorie" ls={0.330} terms="2 terms" rows={[['Empty field', '0', false], ['K', '19', true]]} />
                  <FacetCard name="Weeknummer" ls={0.130} terms="8 terms" rows={[['Empty field', '8', false]]} />
                </Sidebar>

                <ResultList>
                  <ListTools>
                    <CheckBox $mt={9} />
                    <GearButton><FaCogs size={20.500} /><Caret $c="#1c2024" $w={5.500} $ml={4} $mt={7} /></GearButton>
                  </ListTools>
                  <Result>
                    <CheckBox $dark $mt={38.500} />
                    <ResultBody>
                      <ResultTitle><HeadText $size={26} $lh={37.700} $ls={0.560}>Kijkdichtheid en waardering per bevolkingscategorie - Response overzicht -</HeadText></ResultTitle>
                      <ResultTitle>
                        <HeadText $size={26} $lh={37.700} $ls={0.640}>Continu kijkonderzoek - Nederland 1-2-3</HeadText>
                        <TitleDivider />
                        <svg width="28" height="21" viewBox="0 0 28 21" fill="none" stroke="#7b848c" strokeWidth="2"><path d="M11 18Q4.500 15.500 1.200 10.500Q5.500 3 14 2.500Q16 2.500 17 3M20.500 4.500Q24.500 7 26.800 10.500Q22 18 14.500 18.500M20 9Q19.500 13 17 15" /><path d="M17.500 1L9.500 20.500" strokeWidth="2.400" /><path d="M14 3.500L10 16Q7 12 8 8Q9.500 4 14 3.500Z" fill="#7b848c" stroke="none" /></svg>
                      </ResultTitle>
                      <Subtitle>Week 32 (1990) - Kijkcijfers - K_2414</Subtitle>
                      <Snippets>
                        <SnippetLine><Label>OCR words (in page)</Label>:   urd kdh urd kdh urd kdh urd 9 00 NVOSH 0 0 0 0 0 0 0 1 0 0 0 0 0 1300 NVOSH 0 0 0 0 0 0</SnippetLine>
                        <SnippetLine>0 0 0 0 14 55 <Hit>TOESPRAAK</Hit> BUSH 2 64 59 2 72 65 1 66 1 67 0 0, Mrd 900 NVOSH 0 0 0 0 0 0 0 0 0 0 0 1300 NVDSH 0</SnippetLine>
                        <SnippetLine>0 0 0 0 0 0 0 0 0 1*55 <Hit>TOESPRAAK</Hit> BUSH 1 70 64 80 0 60 1 70 65 1 69 1 67 1 70 1 66 62 69 1 0 1850 NVOSH, kdh</SnippetLine>
                        <SnippetLine>yrd kdh yrd kdh yrd kdh yrd 9 00 NVDSH 0 0 0 0 0 0 0 0 0 0 0 0 0 -_- 1300 NVOSH 1 0 0 0 0 0 0 0 0 0 0 0 0 14 55</SnippetLine>
                        <SnippetLine><Hit>TOESPRAAK</Hit> BUSH 1 80 1 63 66 1 70,</SnippetLine>
                        <SnippetLine><Label>OCR words (in blocks)</Label>:  <Hit>TOESPRAAK</Hit> BUSH</SnippetLine>
                      </Snippets>
                      <MetaRow>
                        <IconBox $mt={5} $ml={5.500}>
                          <svg width="27" height="23" viewBox="0 0 27 23"><rect x="1" y="1" width="25" height="21" rx="1.500" fill="none" stroke="#6d7680" strokeWidth="1.800" /><circle cx="6.500" cy="6.500" r="2.500" fill="#6d7680" /><path d="M3.500 19V16L8.500 12.500L11.500 15L17 7.500L23.500 14V19Z" fill="#6d7680" /></svg>
                        </IconBox>
                        <MetaDate>06-08-1990</MetaDate>
                        <MetaMatches>4 matches in archival metadata</MetaMatches>
                        <BookmarkButton><svg width="13" height="14" viewBox="0 0 13 14" fill="#2a2a2c"><path d="M0 0H9V14L4.500 10L0 14ZM10 1L13 3V14L10 11Z" /></svg></BookmarkButton>
                      </MetaRow>
                    </ResultBody>
                  </Result>
                </ResultList>
              </Columns>
            </Content>
          </Page>
          <ScrollTrack><ScrollThumb /></ScrollTrack>
        </Viewport>
      </Browser>

      <Desktop>
        <Dock>
          {apps.map((a, i) => <DockSlot key={i}>{a.icon}{a.dot && <RunningDot />}</DockSlot>)}
          <DockDivider />
          {recents.map((a, i) => <DockSlot key={i}>{a.icon}{a.dot && <RunningDot />}</DockSlot>)}
          <DockDivider />
          <DockSlot><Trash /></DockSlot>
        </Dock>
      </Desktop>
    </Screen>
  );
}
